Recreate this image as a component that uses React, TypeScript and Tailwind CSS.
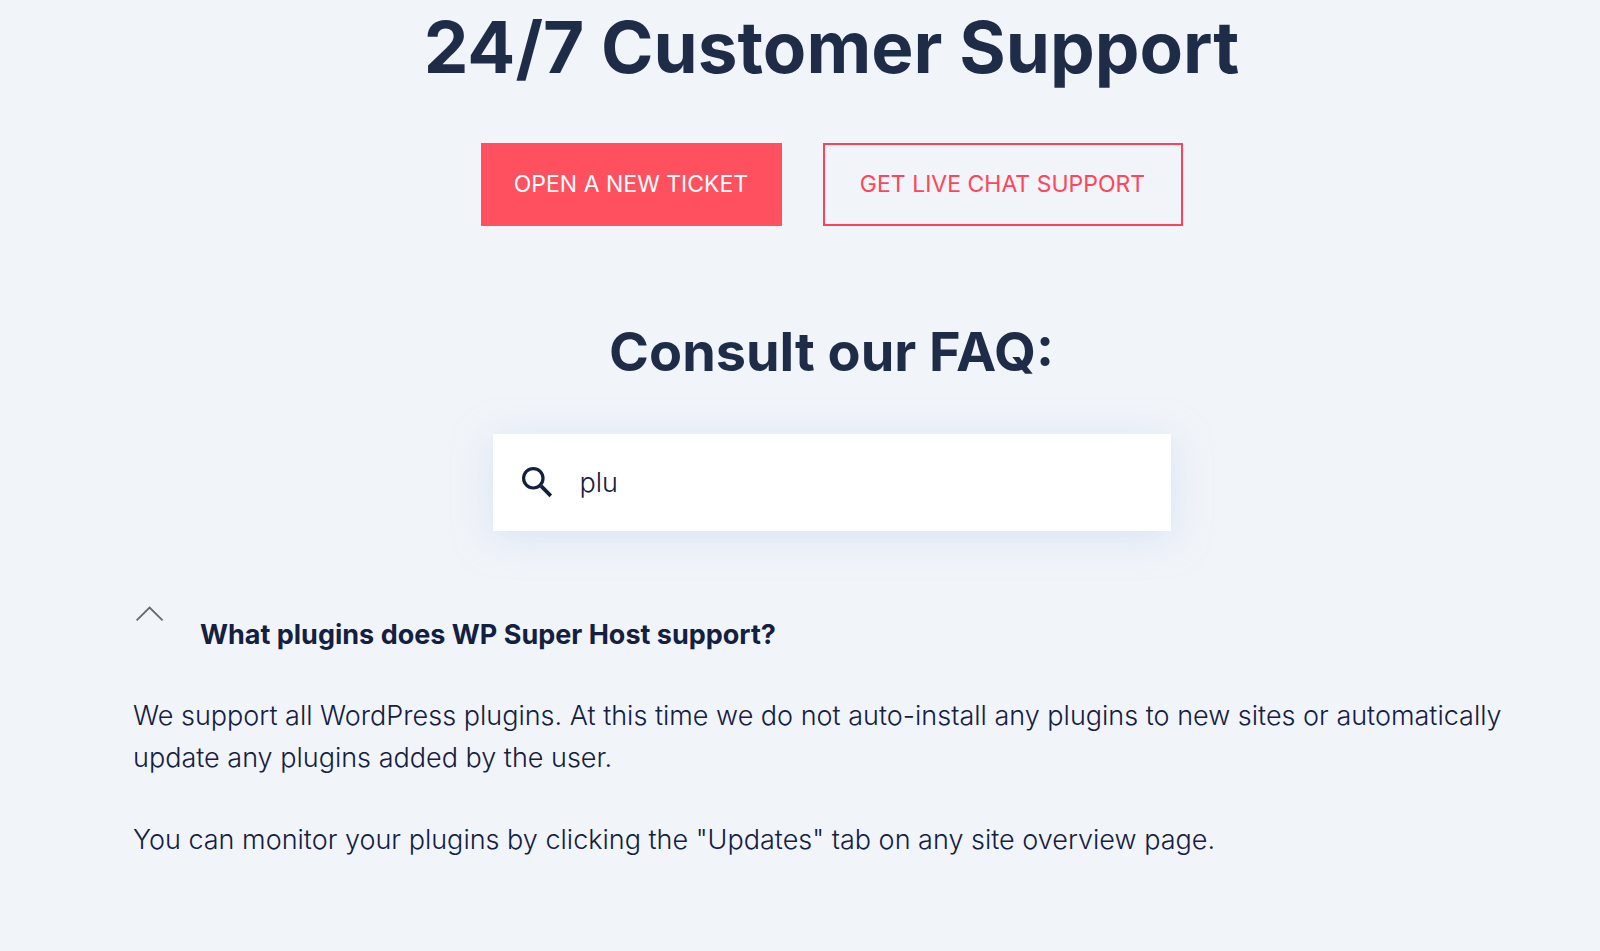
import { useState } from "react";

const faqs = [
  {
    question: "What plugins does WP Super Host support?",
    answer: [
      "We support all WordPress plugins. At this time we do not auto-install any plugins to new sites or automatically update any plugins added by the user.",
      'You can monitor your plugins by clicking the "Updates" tab on any site overview page.',
    ],
  },
];

function SearchIcon() {
  return (
    <svg
      className="w-8 h-8 shrink-0"
      viewBox="0 0 32 32"
      fill="none"
      stroke="currentColor"
      aria-hidden="true"
    >
      <circle cx="12.3" cy="11.3" r="9.7" strokeWidth="3.2" />
      <path d="M20.2 19.2L29.8 28.8" strokeWidth="3.8" />
    </svg>
  );
}

function Chevron({ open }: { open: boolean }) {
  return (
    <svg
      className={open ? "w-7 h-[15px] shrink-0" : "w-7 h-[15px] shrink-0 rotate-180"}
      viewBox="0 0 28 15"
      fill="none"
      stroke="#666a70"
      strokeWidth="1.8"
      aria-hidden="true"
    >
      <path d="M0.6 14.4L13.6 1.6L26.6 14.4" />
    </svg>
  );
}

export default function App() {
  const [search, setSearch] = useState("plu");
  const [open, setOpen] = useState(true);

  const results = faqs.filter((faq) =>
    faq.question.toLowerCase().includes(search.toLowerCase())
  );

  return (
    <main className="min-h-screen bg-[#f1f4f9] pl-[133px] pr-[70px] pb-20 font-['Inter',sans-serif] text-[#14203f]">
      <div className="flex flex-col items-center text-[#1f2c47]">
        <h1 className="pt-[5px] text-[71px] leading-[84px] font-bold">
          24/7 Customer Support
        </h1>
        <div className="mt-[54px] flex gap-[41px] text-[23px]">
          <button className="h-[83px] w-[301px] bg-[#ff5060] text-white">
            OPEN A NEW TICKET
          </button>
          <button className="h-[83px] w-[360px] border-2 border-[#ff4058] text-[#ff4558]">
            GET LIVE CHAT SUPPORT
          </button>
        </div>
        <h2 className="mt-[94px] text-[54px] leading-[64px] font-bold">
          Consult our FAQ:
        </h2>
      </div>

      <label className="mx-auto mt-[50px] flex h-[97px] w-[678px] items-center gap-[27px] bg-white px-7 shadow-[0_6px_36px_#c8d8f099]">
        <SearchIcon />
        <input
          className="w-full bg-transparent pt-[2px] text-[27px] font-light outline-none"
          type="text"
          aria-label="Search the FAQ"
          value={search}
          onChange={(e) => setSearch(e.target.value)}
        />
      </label>

      <div className="mt-[75px] text-[27px] leading-[42px]">
        {results.map((faq) => (
          <div key={faq.question}>
            <button
              className="flex items-start gap-9 pl-[3px] text-left"
              aria-expanded={open}
              onClick={() => setOpen(!open)}
            >
              <Chevron open={open} />
              <span className="pt-2 font-bold">{faq.question}</span>
            </button>
            {open && (
              <div className="mt-[39px] flex flex-col gap-10 font-light">
                {faq.answer.map((text) => (
                  <p key={text}>{text}</p>
                ))}
              </div>
            )}
          </div>
        ))}
      </div>
    </main>
  );
}
